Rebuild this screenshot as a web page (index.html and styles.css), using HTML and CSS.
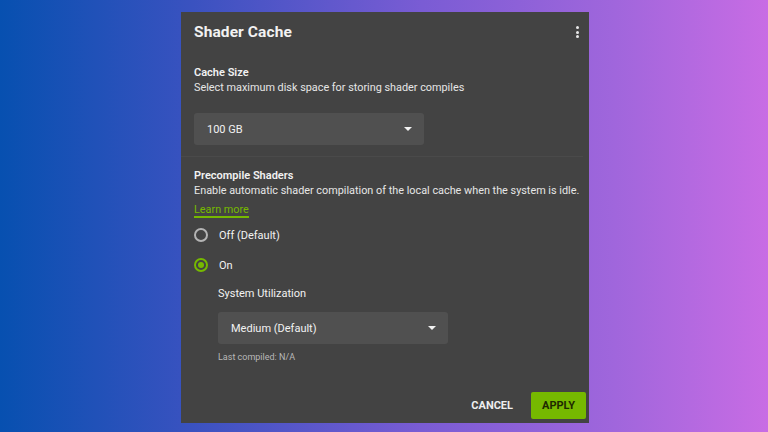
FILE: index.html
```html
<!DOCTYPE html>
<html lang="en">
<head>
    <meta charset="UTF-8">
    <title>Shader Cache</title>
    <link rel="stylesheet" href="styles.css">
</head>
<body>
    <div class="panel">
        <div class="header">
            <h1>Shader Cache</h1>
            <div class="kebab"><span></span><span></span><span></span></div>
        </div>

        <!-- Cache size -->
        <div class="section first">
            <div class="label">Cache Size</div>
            <div class="desc">Select maximum disk space for storing shader compiles</div>
            <div class="select">
                <span>100 GB</span>
                <span class="arrow"></span>
            </div>
        </div>

        <div class="divider"></div>

        <!-- Precompile -->
        <div class="section">
            <div class="label">Precompile Shaders</div>
            <div class="desc">Enable automatic shader compilation of the local cache when the system is idle.</div>
            <a class="learn" href="#">Learn more</a>

            <div class="radios">
                <div class="radio"><span class="dot"></span>Off (Default)</div>
                <div class="radio checked"><span class="dot"></span>On</div>
            </div>

            <div class="sub">
                <div class="label">System Utilization</div>
                <div class="select">
                    <span>Medium (Default)</span>
                    <span class="arrow"></span>
                </div>
                <div class="note">Last compiled: N/A</div>
            </div>
        </div>

        <div class="actions">
            <button class="btn cancel">CANCEL</button>
            <button class="btn apply">APPLY</button>
        </div>
    </div>
</body>
</html>
```

FILE: styles.css
```css
body {
    margin: 0;
    height: 432px;
    overflow: hidden;
    font-family: Roboto, "Liberation Sans", sans-serif;
    background: linear-gradient(90deg, #0750b0 0%, #3a52c0 25%, #7a5cd4 55%, #a066dc 80%, #c86ce4 100%);
    display: flex;
    justify-content: center;
    align-items: flex-start;
}

/* Dialog */
.panel {
    width: 408px;
    height: 411px;
    margin-top: 12px;
    margin-left: 2px;
    background-color: #434343;
    color: #f2f2f2;
    box-sizing: border-box;
    padding: 10px 3px 0 13px;
    display: flex;
    flex-direction: column;
}

.header {
    display: flex;
    justify-content: space-between;
    align-items: center;
    height: 20px;
    padding-right: 7px;
}

h1 {
    margin: 0;
    font-size: 15.5px;
    font-weight: 700;
    letter-spacing: 0.1px;
}

.kebab {
    display: flex;
    flex-direction: column;
    gap: 1.5px;
}

.kebab span {
    width: 3px;
    height: 3px;
    border-radius: 50%;
    background: #e8e8e8;
}

.section.first {
    margin-top: 23px;
}

.label {
    font-size: 11px;
    font-weight: 600;
    line-height: 15px;
}

.desc {
    font-size: 10.85px;
    line-height: 15px;
    color: #e6e6e6;
}

.select {
    width: 230px;
    height: 32px;
    margin-top: 18px;
    background-color: #505050;
    border-radius: 3px;
    box-sizing: border-box;
    padding: 0 12px 0 13px;
    display: flex;
    align-items: center;
    justify-content: space-between;
    font-size: 11px;
}

.arrow {
    width: 0;
    height: 0;
    border-left: 4px solid transparent;
    border-right: 4px solid transparent;
    border-top: 4px solid #f2f2f2;
}

.divider {
    height: 1px;
    margin: 11px 3px 11px -13px;
    background: #4a4a4a;
}

.learn {
    display: inline-block;
    font-size: 10.85px;
    line-height: 13px;
    color: #76b900;
    text-decoration: none;
    border-bottom: 2px solid #76b900;
}

.radios {
    margin-top: 2px;
}

.radio {
    display: flex;
    align-items: center;
    gap: 11px;
    height: 30px;
    font-size: 11px;
}

.dot {
    width: 14px;
    height: 14px;
    box-sizing: border-box;
    border: 2px solid #b4b4b4;
    border-radius: 50%;
    display: flex;
    align-items: center;
    justify-content: center;
}

.radio.checked .dot {
    border-color: #76b900;
}

.radio.checked .dot::after {
    content: "";
    width: 6px;
    height: 6px;
    border-radius: 50%;
    background: #76b900;
}

.sub {
    margin-top: 6px;
    margin-left: 24px;
}

.sub .label {
    font-weight: 400;
}

.sub .select {
    margin-top: 11px;
}

.note {
    margin-top: 8px;
    font-size: 9px;
    color: #b8b8b8;
}

/* Buttons */
.actions {
    margin-top: auto;
    margin-bottom: 4px;
    display: flex;
    justify-content: flex-end;
    align-items: center;
    gap: 18px;
}

.btn {
    font-family: inherit;
    font-size: 11px;
    font-weight: 700;
    border: none;
    padding: 0;
    cursor: pointer;
}

.cancel {
    background: none;
    color: #eeeeee;
}

.apply {
    background: #76b900;
    color: #1e2a00;
    width: 55px;
    height: 27px;
    border-radius: 2px;
}
```
